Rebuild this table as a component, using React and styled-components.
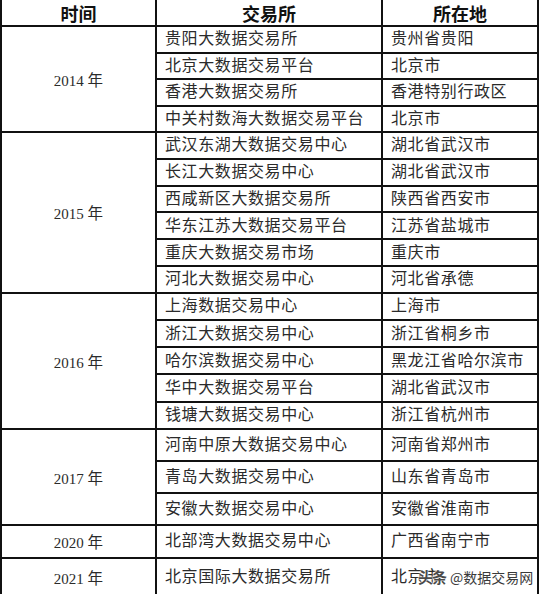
import React from 'react'
import styled, { createGlobalStyle } from 'styled-components';

const GlobalStyle = createGlobalStyle`
    html, body {
        margin: 0;
        padding: 0;
        background: #fff;
    }
`

const Page = styled.div`
    position: relative;
    width: 540px;
    height: 594px;
    overflow: hidden;
    background: #fff;
`

const Table = styled.table`
    border-collapse: collapse;
    table-layout: fixed;
    width: 537px;
    margin-left: 0;
    font-family: "Liberation Serif", "Noto Sans CJK SC", serif;
    color: #2b2b2b;
`

const Row = styled.tr`
    height: ${p => p.$h}px;
`

const HeadCell = styled.th`
    border: 2px solid #111;
    border-top: none;
    padding: 0;
    font-family: "Noto Sans CJK SC", sans-serif;
    font-size: 18px;
    font-weight: 700;
    color: #111;
    text-align: center;
    line-height: 1;
`

const YearCell = styled.td`
    border: 2px solid #111;
    padding: 0;
    text-align: center;
    font-size: 15px;
    white-space: nowrap;
`

const Cell = styled.td`
    border: 2px solid #111;
    padding: 0 0 0 8px;
    font-size: 16px;
    letter-spacing: 0.6px;
    white-space: nowrap;
    line-height: 1;
`

const Nian = styled.span`
    font-family: "Noto Sans CJK SC", sans-serif;
    font-size: 15.5px;
`

const Watermark = styled.div`
    position: absolute;
    left: 418px;
    top: 566px;
    display: flex;
    align-items: center;
    gap: 4px;
    font-family: "Noto Sans CJK SC", sans-serif;
    font-size: 14px;
    color: #3a3a3a;
    text-shadow: 0 0 2px #fff, 0 0 2px #fff, 0 0 1px #fff;
    white-space: nowrap;
`

const Logo = styled.span`
    font-size: 15px;
    font-weight: 700;
    color: #4a4a4a;
    letter-spacing: -1px;
`

const groups = [
    { year: '2014', h: 26.5, rows: [
        ['贵阳大数据交易所', '贵州省贵阳'],
        ['北京大数据交易平台', '北京市'],
        ['香港大数据交易所', '香港特别行政区'],
        ['中关村数海大数据交易平台', '北京市'],
    ] },
    { year: '2015', h: 26.8, rows: [
        ['武汉东湖大数据交易中心', '湖北省武汉市'],
        ['长江大数据交易中心', '湖北省武汉市'],
        ['西咸新区大数据交易所', '陕西省西安市'],
        ['华东江苏大数据交易平台', '江苏省盐城市'],
        ['重庆大数据交易市场', '重庆市'],
        ['河北大数据交易中心', '河北省承德'],
    ] },
    { year: '2016', h: 27.2, rows: [
        ['上海数据交易中心', '上海市'],
        ['浙江大数据交易中心', '浙江省桐乡市'],
        ['哈尔滨数据交易中心', '黑龙江省哈尔滨市'],
        ['华中大数据交易平台', '湖北省武汉市'],
        ['钱塘大数据交易中心', '浙江省杭州市'],
    ] },
    { year: '2017', h: 32, rows: [
        ['河南中原大数据交易中心', '河南省郑州市'],
        ['青岛大数据交易中心', '山东省青岛市'],
        ['安徽大数据交易中心', '安徽省淮南市'],
    ] },
    { year: '2020', h: 33, rows: [
        ['北部湾大数据交易中心', '广西省南宁市'],
    ] },
    { year: '2021', h: 38, rows: [
        ['北京国际大数据交易所', '北京市'],
    ] },
]

export default function App() {
    return (
        <Page>
            <GlobalStyle />
            <Table>
                <colgroup>
                    <col style={{ width: 155 }} />
                    <col style={{ width: 226 }} />
                    <col style={{ width: 156 }} />
                </colgroup>
                <thead>
                    <Row $h={26}>
                        <HeadCell>时间</HeadCell>
                        <HeadCell>交易所</HeadCell>
                        <HeadCell>所在地</HeadCell>
                    </Row>
                </thead>
                <tbody>
                    {groups.map(g => g.rows.map((r, i) => (
                        <Row key={g.year + i} $h={g.h}>
                            {i === 0 && (
                                <YearCell rowSpan={g.rows.length}>
                                    {g.year} <Nian>年</Nian>
                                </YearCell>
                            )}
                            <Cell>{r[0]}</Cell>
                            <Cell>{r[1]}</Cell>
                        </Row>
                    )))}
                </tbody>
            </Table>
            {/* 头条水印 */}
            <Watermark>
                <Logo>头条</Logo>
                <span>@数据交易网</span>
            </Watermark>
        </Page>
    )
}
